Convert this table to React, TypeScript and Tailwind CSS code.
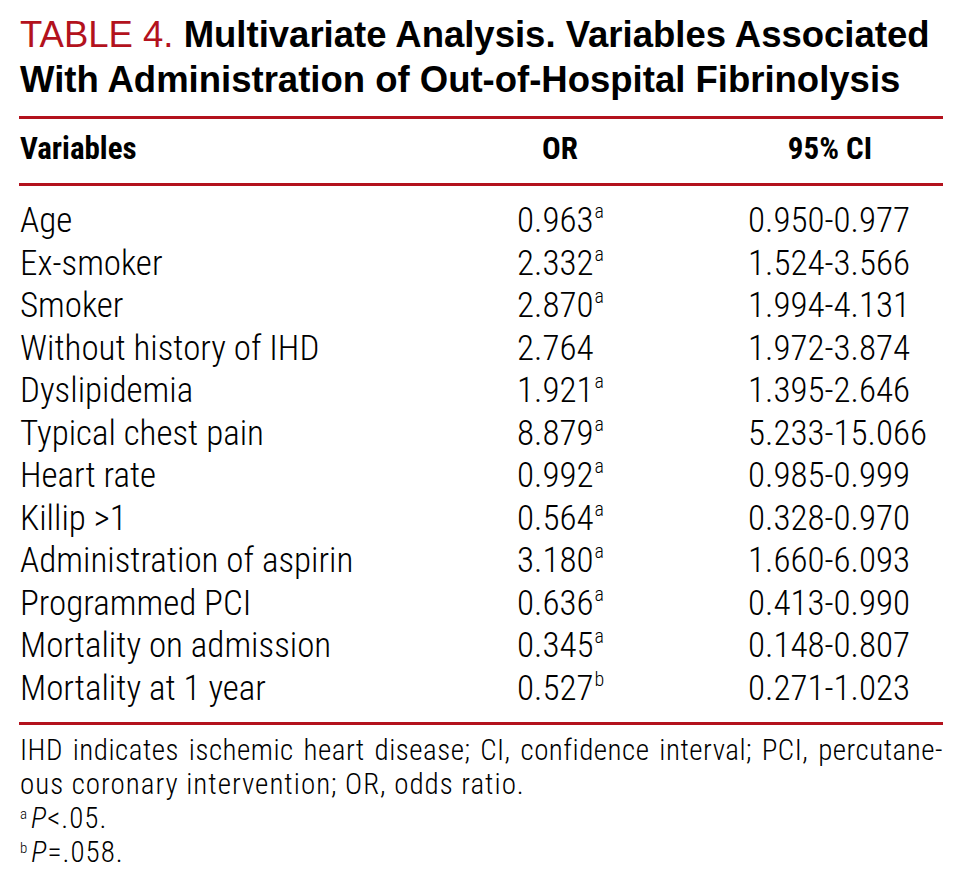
type Row = {
  label: string;
  or: string;
  mark?: string;
  ci: string;
};

const rows: Row[] = [
  { label: "Age", or: "0.963", mark: "a", ci: "0.950-0.977" },
  { label: "Ex-smoker", or: "2.332", mark: "a", ci: "1.524-3.566" },
  { label: "Smoker", or: "2.870", mark: "a", ci: "1.994-4.131" },
  { label: "Without history of IHD", or: "2.764", ci: "1.972-3.874" },
  { label: "Dyslipidemia", or: "1.921", mark: "a", ci: "1.395-2.646" },
  { label: "Typical chest pain", or: "8.879", mark: "a", ci: "5.233-15.066" },
  { label: "Heart rate", or: "0.992", mark: "a", ci: "0.985-0.999" },
  { label: "Killip >1", or: "0.564", mark: "a", ci: "0.328-0.970" },
  { label: "Administration of aspirin", or: "3.180", mark: "a", ci: "1.660-6.093" },
  { label: "Programmed PCI", or: "0.636", mark: "a", ci: "0.413-0.990" },
  { label: "Mortality on admission", or: "0.345", mark: "a", ci: "0.148-0.807" },
  { label: "Mortality at 1 year", or: "0.527", mark: "b", ci: "0.271-1.023" },
];

const cond = "font-['Roboto_Condensed',_'Liberation_Sans',_sans-serif]";

export default function App() {
  return (
    <div className="w-[966px] h-[888px] bg-white text-black">
      <div className="pl-[19px] pr-[23px]">
        <h1 className="pt-[12px] pl-[1px] font-['Liberation_Sans',_Arial,_sans-serif] text-[36.5px] leading-[45px] font-bold">
          <span className="font-normal text-[#b3121d]">TABLE 4. </span>
          Multivariate Analysis. Variables Associated
          <br />
          With Administration of Out-of-Hospital Fibrinolysis
        </h1>

        <div className="mt-[14px] h-[3px] bg-[#b3121d]" />

        <div className={`grid grid-cols-[498px_231px_1fr] pt-[12px] pb-[16px] text-[31px] leading-[36px] font-bold ${cond}`}>
          <div className="pl-[1px]">Variables</div>
          <div className="w-[86px] text-center">OR</div>
          <div className="w-[164px] text-center">95% CI</div>
        </div>

        <div className="h-[3px] bg-[#b3121d]" />

        <div className={`pt-[14px] pb-[12px] text-[35px] leading-[42.5px] font-light ${cond}`}>
          {rows.map((r) => (
            <div key={r.label} className="grid grid-cols-[498px_231px_1fr]">
              <div className="pl-[1px]">{r.label}</div>
              <div>
                {r.or}
                {r.mark && (
                  <sup className="text-[20px] top-[-14px] ml-[1px]">{r.mark}</sup>
                )}
              </div>
              <div>{r.ci}</div>
            </div>
          ))}
        </div>

        <div className="h-[3px] bg-[#b3121d]" />

        <div className={`pt-[8px] pl-[1px] text-[29px] leading-[34px] tracking-[1px] font-light ${cond}`}>
          <div className="text-justify [text-align-last:justify] tracking-[0.5px]">
            IHD indicates ischemic heart disease; CI, confidence interval; PCI, percutane-
          </div>
          <div>ous coronary intervention; OR, odds ratio.</div>
          <div>
            <sup className="text-[15px] top-[-9px] mr-[3px]">a</sup>
            <i>P</i>&lt;.05.
          </div>
          <div>
            <sup className="text-[15px] top-[-9px] mr-[3px]">b</sup>
            <i>P</i>=.058.
          </div>
        </div>
      </div>
    </div>
  );
}
